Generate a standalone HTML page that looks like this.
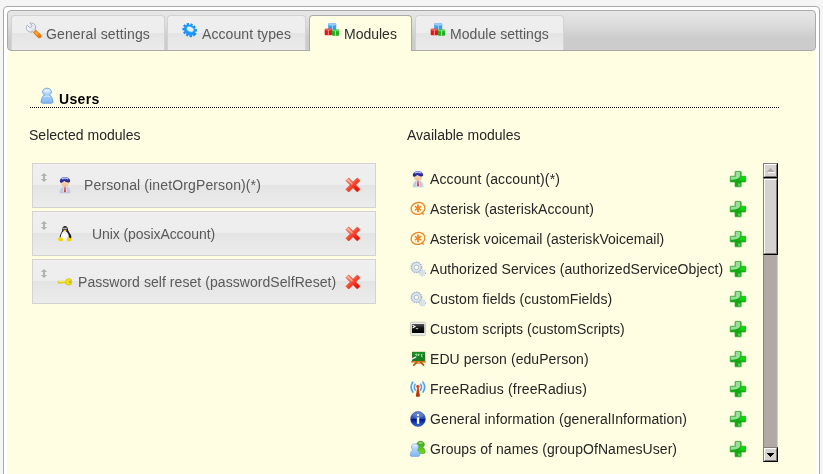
<!DOCTYPE html>
<html>
<head>
<meta charset="utf-8">
<title>LDAP Account Manager - Modules</title>
<style>
html,body{margin:0;padding:0}
body{background:#f5f5f5;font-family:"Liberation Sans",sans-serif;font-size:14px;color:#000;width:823px;height:474px;overflow:hidden;position:relative}
#root{position:absolute;left:0;top:0;width:823px;height:474px;overflow:hidden;will-change:transform}
#widget{position:absolute;left:3px;top:6px;width:815px;height:600px;border:1px solid #aaa;border-radius:4px;background:#fff}
#nav{position:absolute;left:7px;top:10px;width:807px;height:39px;border:1px solid #aaa;border-radius:4px;background:linear-gradient(#e7e7e7 0,#dcdcdc 35%,#cccccc 70%,#cccccc 100%)}
#panel{position:absolute;left:7px;top:51px;width:809px;height:560px;background:#fffde2}
.tab{position:absolute;top:15px;height:34px;border:1px solid #d3d3d3;border-bottom:0;border-radius:4px 4px 0 0;background:linear-gradient(#efefef 0,#ededed 50%,#e4e4e4 50%,#ebebeb 100%)}
.tab.active{border-color:#aaa;background:#fffde2;height:35px}
.tx{position:absolute;line-height:16px;height:16px;font-size:14px;white-space:pre}
.legend{position:absolute;left:59px;top:91px;font-weight:bold;font-size:14px;line-height:16px;letter-spacing:.35px}
.dotted{position:absolute;left:30px;top:107px;width:750px;height:1px;background:repeating-linear-gradient(90deg,#000 0,#000 1px,transparent 1px,transparent 2px)}
.box{position:absolute;left:32px;width:342px;height:43px;border:1px solid #d3d3d3;background:linear-gradient(#efefef 0,#ededed 50%,#e4e4e4 50%,#ececec 100%)}
#sb{position:absolute;left:763px;top:163px;width:15px;height:299px;background:#b1a9a6;box-sizing:border-box;border-left:1px solid #8a8380;border-right:1px solid #d4cfcc}
.sbtn{position:absolute;left:-1px;width:11px;height:11px;background:#d6d2d0;border-style:solid;border-width:2px;border-color:#fff #7b7674 #7b7674 #fff;outline:0}
.sbtn:before{content:"";position:absolute;left:-2px;top:-2px;right:-2px;bottom:-2px;border-style:solid;border-width:1px;border-color:#848080 #000 #000 #848080}
#icons{position:absolute;left:0;top:0}
</style>
</head>
<body>
<div id="root">
<div id="widget"></div>
<div id="nav"></div>
<div id="panel"></div>

<div class="tab" style="left:11px;width:152px"></div>
<div class="tab" style="left:167px;width:137px"></div>
<div class="tab active" style="left:309px;width:101px"></div>
<div class="tab" style="left:415px;width:147px"></div>

<div class="legend">Users</div>
<div class="dotted"></div>

<div class="box" style="top:163px"></div>
<div class="box" style="top:211px"></div>
<div class="box" style="top:259px"></div>

<div id="sb">
 <div class="sbtn" style="top:0"></div>
 <div class="sbtn" style="top:15px;height:73px"></div>
 <div class="sbtn" style="top:284px"></div>
</div>

<div class="tx" style="left:46px;top:26px;color:#5a5a5a;letter-spacing:0.128px">General settings</div>
<div class="tx" style="left:202px;top:26px;color:#5a5a5a;letter-spacing:0.082px">Account types</div>
<div class="tx" style="left:344px;top:26px;color:#2e2e2e;letter-spacing:-0.003px">Modules</div>
<div class="tx" style="left:450px;top:26px;color:#5a5a5a;letter-spacing:0.049px">Module settings</div>
<div class="tx" style="left:29px;top:127px;color:#262626;letter-spacing:0.013px">Selected modules</div>
<div class="tx" style="left:407px;top:127px;color:#262626;letter-spacing:0.007px">Available modules</div>
<div class="tx" style="left:84px;top:177px;color:#5a5a5a;letter-spacing:0.129px">Personal (inetOrgPerson)(*)</div>
<div class="tx" style="left:92px;top:226px;color:#5a5a5a;letter-spacing:-0.074px">Unix (posixAccount)</div>
<div class="tx" style="left:78px;top:274px;color:#5a5a5a;letter-spacing:0.059px">Password self reset (passwordSelfReset)</div>
<div class="tx" style="left:430px;top:171px;color:#262626;letter-spacing:0.120px">Account (account)(*)</div>
<div class="tx" style="left:430px;top:201px;color:#262626;letter-spacing:0.084px">Asterisk (asteriskAccount)</div>
<div class="tx" style="left:430px;top:231px;color:#262626;letter-spacing:0.021px">Asterisk voicemail (asteriskVoicemail)</div>
<div class="tx" style="left:430px;top:261px;color:#262626;letter-spacing:0.066px">Authorized Services (authorizedServiceObject)</div>
<div class="tx" style="left:430px;top:291px;color:#262626;letter-spacing:0.061px">Custom fields (customFields)</div>
<div class="tx" style="left:430px;top:321px;color:#262626;letter-spacing:0.033px">Custom scripts (customScripts)</div>
<div class="tx" style="left:430px;top:351px;color:#262626;letter-spacing:0.069px">EDU person (eduPerson)</div>
<div class="tx" style="left:430px;top:381px;color:#262626;letter-spacing:0.161px">FreeRadius (freeRadius)</div>
<div class="tx" style="left:430px;top:411px;color:#262626;letter-spacing:0.105px">General information (generalInformation)</div>
<div class="tx" style="left:430px;top:441px;color:#262626;letter-spacing:0.059px">Groups of names (groupOfNamesUser)</div>

<svg id="icons" width="823" height="474" viewBox="0 0 823 474">
<defs>
 <linearGradient id="gOr" x1="0" y1="0" x2="1" y2="1"><stop offset="0" stop-color="#fbb03a"/><stop offset="1" stop-color="#f07a00"/></linearGradient>
 <linearGradient id="gSil" x1="0" y1="0" x2="1" y2="1"><stop offset="0" stop-color="#ffffff"/><stop offset=".45" stop-color="#f2f3f8"/><stop offset="1" stop-color="#bcc0d6"/></linearGradient>
 <linearGradient id="gRed" x1="0" y1="0" x2="1" y2="1"><stop offset="0" stop-color="#ffb09a"/><stop offset=".4" stop-color="#fa5a44"/><stop offset=".7" stop-color="#f41c0c"/><stop offset="1" stop-color="#f00000"/></linearGradient>
 <linearGradient id="gUser" x1="0" y1="0" x2="0" y2="1"><stop offset="0" stop-color="#cfe6ff"/><stop offset="1" stop-color="#7fb6f4"/></linearGradient>
 <linearGradient id="gGrn" x1="0" y1="0" x2="0" y2="1"><stop offset="0" stop-color="#3aa51a"/><stop offset="1" stop-color="#6fdc20"/></linearGradient>
 <linearGradient id="gHair" x1="0" y1="0" x2="0" y2="1"><stop offset="0" stop-color="#6f7fd6"/><stop offset=".5" stop-color="#2f2fa0"/><stop offset="1" stop-color="#23238c"/></linearGradient>
 <linearGradient id="gInfo" x1="0" y1="0" x2="0" y2="1"><stop offset="0" stop-color="#5a7fd0"/><stop offset=".5" stop-color="#2446a8"/><stop offset=".52" stop-color="#00148c"/><stop offset="1" stop-color="#2f6fd8"/></linearGradient>
 <linearGradient id="gTow" x1="0" y1="0" x2="0" y2="1"><stop offset="0" stop-color="#ee4a10"/><stop offset="1" stop-color="#a83200"/></linearGradient>
 <linearGradient id="gScr" x1="0" y1="0" x2="0" y2="1"><stop offset="0" stop-color="#555"/><stop offset=".45" stop-color="#111"/><stop offset="1" stop-color="#000"/></linearGradient>

 <!-- wrench -->
  <g id="i-wrench">
  <path d="M1.2 2.2 L3.6 4.6 L5.6 4 L6 2 L3.9 0.2 C6.5 -0.6 9.2 1 9.6 3.6 C9.8 4.8 9.6 5.6 9.2 6.4 L10.4 7.6 L8 10 L6.8 8.8 C4.6 9.8 1.6 8.8 0.6 6.2 C0.1 4.8 0.4 3.2 1.2 2.2 Z" fill="url(#gSil)" stroke="#8f96b8" stroke-width=".7"/>
  <path d="M9.7 9.5 L13.5 13.2" stroke="#e07000" stroke-width="4" stroke-linecap="round"/>
  <path d="M9.7 9.3 L13.5 13" stroke="url(#gOr)" stroke-width="3" stroke-linecap="round"/>
  <path d="M7.9 9.9 L10.3 7.5" stroke="#f08a10" stroke-width="1.4"/>
  <circle cx="13.3" cy="13" r=".8" fill="#ff5a10"/>
 </g>

 <!-- blue gear -->
  <g id="i-gear">
  <g transform="translate(7.7 8.1) rotate(38)">
   <ellipse rx="6.6" ry="5.5" fill="none" stroke="#1c8cf6" stroke-width="2.2" stroke-dasharray="2.2 1.4"/>
   <ellipse rx="6.2" ry="5.1" fill="#1e94fa"/>
  </g>
  <g transform="translate(8.2 7.2) rotate(24)">
   <ellipse rx="4.2" ry="3" fill="#35c0ff"/>
   <ellipse rx="3.4" ry="2.2" fill="#ededed"/>
  </g>
 </g>

 <!-- cubes -->
  <g id="i-cubes">
  <rect x="4.2" y="0.2" width="8" height="6.8" rx="1" fill="#3f9cf2"/>
  <rect x="4.4" y="0.3" width="7.6" height="2.2" rx="1" fill="#9ccdf8"/>
  <rect x="7.9" y="2" width=".8" height="5" fill="#d6ecff" opacity=".8"/>
  <rect x="0.7" y="5.7" width="7.3" height="6.6" rx="1" fill="#e01616"/>
  <rect x="0.9" y="5.8" width="6.9" height="1.6" rx=".8" fill="#f06060"/>
  <rect x="3.9" y="7" width=".8" height="5" fill="#ffd0d0" opacity=".8"/>
  <rect x="7.9" y="6.6" width="7.3" height="6.2" rx="1" fill="#22b022"/>
  <rect x="8.1" y="6.7" width="6.9" height="1.6" rx=".8" fill="#66da66"/>
  <rect x="11.2" y="8" width=".8" height="4.6" fill="#d8ffd8" opacity=".8"/>
 </g>

 <!-- single user (blue) -->
 <g id="i-user">
  <path d="M8 0.2 C10.6 0.2 12.4 1.8 12.4 3.7 C12.4 5.2 11.6 6.3 10.4 6.9 C12.4 7.8 13.4 10.5 14 13.6 C14.1 14.6 13.4 15.2 12.4 15.2 L3.6 15.2 C2.6 15.2 1.9 14.6 2 13.6 C2.6 10.5 3.6 7.8 5.6 6.9 C4.4 6.3 3.6 5.2 3.6 3.7 C3.6 1.8 5.4 0.2 8 0.2 Z" fill="url(#gUser)" stroke="#5b93d8" stroke-width=".8"/>
  <ellipse cx="8" cy="2.6" rx="3.1" ry="1.6" fill="#e6f3ff" opacity=".8"/>
  <path d="M4.4 9.2 C6 7.8 10 7.8 11.6 9.2" stroke="#dbecff" stroke-width="1" fill="none" opacity=".8"/>
 </g>

 <!-- person with blue hair and tie -->
  <g id="i-person">
  <path d="M3.2 15.8 C3.2 12.6 4.6 10.2 6.6 9.6 L9.4 9.6 C11.4 10.2 13 12.6 13 15.8 Z" fill="#d9dfee" stroke="#a4aed0" stroke-width=".6"/>
  <path d="M4.2 15.6 C4.2 13.4 5 11.6 6.2 10.6 L5.4 15.6 Z M11.9 15.6 C11.9 13.4 11.1 11.6 9.9 10.6 L10.7 15.6 Z" fill="#b4bcdc"/>
  <path d="M7.6 9.6 L8.4 9.6 L8.8 14.6 L8 15.6 L7.2 14.6 Z" fill="#e21b1b"/>
  <ellipse cx="8" cy="6.2" rx="3.9" ry="3.6" fill="#f7cfa6"/>
  <path d="M2.9 4.8 C2.5 2.2 4.8 0.1 8 0.1 C11.2 0.1 13.5 2.2 13.1 4.8 C12.4 6 9.8 5.6 7.6 4 C6.6 4.4 5.6 4.8 4.8 5.8 C3.8 5.9 3.1 5.5 2.9 4.8 Z" fill="url(#gHair)"/>
  <path d="M5 2 C6.4 0.9 9.6 0.9 11 2" stroke="#b4c0f0" stroke-width="1.3" fill="none"/>
  <path d="M5.6 7.6 C6.6 8.8 9.4 8.8 10.4 7.6" stroke="#e0a070" stroke-width=".5" fill="none"/>
 </g>

 <!-- tux -->
  <g id="i-tux">
  <path d="M8 0.6 C9.8 0.6 10.8 2 10.9 3.8 C11 5.6 12.9 7.4 13.9 9.6 C14.7 11.4 14.4 13.4 13 14.4 L3.6 14.4 C2.4 13.4 2.4 11.4 3.1 9.8 C3.9 7.6 5.2 6 5.3 4 C5.4 2 6.2 0.6 8 0.6 Z" fill="#1a1a1a"/>
  <path d="M7.7 5.2 C9.6 5.2 10.8 7.6 11.5 9.6 C12.2 11.6 11.6 14.2 9.8 14.8 L5.4 14.8 C3.6 14.2 3.4 11.8 4 9.8 C4.6 7.8 5.8 5.2 7.7 5.2 Z" fill="#f8f8f8"/>
  <path d="M10.4 7.4 C11.2 9.2 11.8 11.4 11 14" stroke="#c8c8c8" stroke-width=".8" fill="none"/>
  <ellipse cx="7" cy="3.1" rx=".8" ry="1" fill="#ddd"/><ellipse cx="9" cy="3.1" rx=".8" ry="1" fill="#ddd"/>
  <path d="M6.1 4.7 C6.9 4 8.9 4 9.8 4.7 C9.1 6 6.9 6.2 6.1 4.7 Z" fill="#f6c010"/>
  <path d="M1.2 13 C1.8 11.4 3.6 11 4.6 12 C5.6 13 6.6 14 6.2 15 C5.6 16.2 2.6 15.8 1.6 15 C0.9 14.4 0.9 13.8 1.2 13 Z" fill="#f4d20c"/>
  <path d="M10 12.4 C10.6 11.4 12.4 11.6 13.2 12.4 C14 13.2 15 13.6 14.8 14.4 C14.4 15.6 11.6 16 10.4 15.4 C9.6 15 9.6 13.4 10 12.4 Z" fill="#f4d20c"/>
 </g>

 <!-- key -->
  <g id="i-key">
  <path d="M0.9 7 L9 7 L9 9 L5 9 L4.6 9.6 L3.8 9.6 L3.3 9 L2.8 9.6 L1.8 9.6 L0.9 8.7 Z" fill="#e6d716" stroke="#c4b518" stroke-width=".3"/>
  <circle cx="11.7" cy="7.9" r="3.3" fill="#efe016" stroke="#c4b518" stroke-width=".5"/>
  <rect x="1.4" y="7.2" width="7" height=".7" fill="#fbf37a"/>
  <ellipse cx="13.1" cy="7.9" rx=".7" ry="1.1" fill="#9a9460"/>
 </g>

 <!-- red X -->
  <g id="i-del">
  <path d="M3.7 1 L8 5.3 L12.3 1 L15 3.7 L10.7 8 L15 12.3 L12.3 15 L8 10.7 L3.7 15 L1 12.3 L5.3 8 L1 3.7 Z" fill="url(#gRed)" stroke="#dc3c20" stroke-width=".7" stroke-linejoin="round"/>
  <path d="M3 2.8 L6.8 6.6" stroke="#ffc4b4" stroke-width="1.6" stroke-linecap="round" opacity=".7"/>
 </g>

 <!-- green plus -->
 <g id="i-add">
  <path d="M5.6 0.4 L10.6 0.4 Q11.2 0.4 11.2 1 L11.2 5.2 L15.2 5.2 Q15.8 5.2 15.8 5.8 L15.8 10.4 Q15.8 11 15.2 11 L11.2 11 L11.2 15.2 Q11.2 15.8 10.6 15.8 L5.6 15.8 Q5 15.8 5 15.2 L5 11 L0.8 11 Q0.2 11 0.2 10.4 L0.2 5.8 Q0.2 5.2 0.8 5.2 L5 5.2 L5 1 Q5 0.4 5.6 0.4 Z" fill="#12a812" stroke="#3aa83a" stroke-width=".7"/>
  <path d="M10.8 5.6 L15.4 5.6 L15.4 9.4 L9 9.4 Z" fill="#10d410"/>
  <path d="M5.6 0.9 L10.2 0.9 L10.2 5 C10 7.4 6 8.6 0.8 8.8 L0.8 5.8 L5.6 5.8 Z" fill="#b4e8b4" opacity=".85"/>
  <path d="M7.6 12.6 L10.4 12.6 L10.4 15.2 L8.6 15.2 Z" fill="#7fdc7f" opacity=".7"/>
 </g>

 <!-- asterisk -->
 <g id="i-ast">
  <g transform="rotate(-18 8 8.2)">
   <ellipse cx="8" cy="8.2" rx="7" ry="5.9" fill="none" stroke="#ef8421" stroke-width="1.3"/>
  </g>
  <path d="M11.6 13.2 L13.8 14.6 L12.8 12.2" fill="#ef8421" stroke="#ef8421" stroke-width=".6"/>
  <g stroke="#ef8421" stroke-linecap="butt">
   <path d="M8 4.3 L8 12" stroke-width="1.8"/>
   <path d="M4.8 6.2 L11.2 10" stroke-width="1.5"/>
   <path d="M4.8 10 L11.2 6.2" stroke-width="1.5"/>
  </g>
 </g>

 <!-- grey gears -->
  <g id="i-cogs">
  <circle cx="6.4" cy="6.4" r="5.2" fill="none" stroke="#a6b9ce" stroke-width="1.5" stroke-dasharray="1.35 1.0"/>
  <circle cx="6.4" cy="6.4" r="3.6" fill="none" stroke="#dfe7f0" stroke-width="2.6"/>
  <circle cx="6.4" cy="6.4" r="4.8" fill="none" stroke="#93a9c2" stroke-width=".6"/>
  <circle cx="6.4" cy="6.4" r="2.3" fill="none" stroke="#8ea5bf" stroke-width=".7"/>
  <circle cx="12.4" cy="12" r="2.8" fill="none" stroke="#a6b9ce" stroke-width="1.2" stroke-dasharray="1.1 .9"/>
  <circle cx="12.4" cy="12" r="1.8" fill="none" stroke="#dbe4ee" stroke-width="1.7"/>
  <circle cx="12.4" cy="12" r=".9" fill="none" stroke="#a9bcd2" stroke-width=".4"/>
 </g>

 <!-- terminal -->
 <g id="i-term">
  <rect x="0.4" y="2" width="15.2" height="13.4" rx="1.4" fill="#ececea" stroke="#c4c4b4" stroke-width=".8"/>
  <rect x="1.9" y="3.8" width="12.3" height="9" rx=".6" fill="url(#gScr)"/>
  <path d="M2.6 5 L5 6.4 L2.6 7.8" stroke="#fff" stroke-width="1.1" fill="none"/>
  <rect x="5.8" y="8" width="2.4" height=".9" fill="#cfd8d8"/>
 </g>

 <!-- blackboard -->
  <g id="i-edu">
  <rect x="2" y="1.6" width="13.2" height="9.6" fill="#8a4a1c"/>
  <rect x="2.3" y="1.8" width="12.4" height="8.9" fill="#11821f"/>
  <rect x="2.3" y="1.8" width="12.4" height="3" fill="#1a9a2a" opacity=".6"/>
  <path d="M5 4.6 L6.4 3.6 L6.4 6 M8 3.8 L9.4 4.6 L8 5.6 Z M11 4.4 L12.4 4.4 M11.6 4.4 L11.6 6.6 L12.6 6.6" stroke="#d6f2d6" stroke-width=".7" fill="none"/>
  <rect x="1.2" y="10.8" width="14.6" height="1.6" fill="#d27a20"/>
  <path d="M6.6 12.2 L3.8 15 M11 12.2 L13.6 15" stroke="#b4560e" stroke-width="1.7" stroke-linecap="round"/>
  <path d="M6 12.9 L11.6 12.9" stroke="#c8701a" stroke-width="1"/>
  <path d="M0.6 9.4 L5.6 7" stroke="#f2f2f8" stroke-width="1.4" stroke-linecap="round"/>
 </g>

 <!-- radius antenna -->
 <g id="i-rad">
  <path d="M7.3 8.4 L8.5 8.4 L10 18.2 Q7.9 19.2 5.8 18.2 Z" fill="url(#gTow)"/>
  <circle cx="7.9" cy="8.4" r="1.7" fill="#ee4812"/>
  <g fill="none" stroke="#4ea2f8" stroke-linecap="round">
   <path d="M2.8 4.2 C0.7 7.2 0.7 11 2.8 14" stroke-width="1.7"/>
   <path d="M5.2 6.2 C4 8 4 10.4 5.2 12.2" stroke-width="1.5"/>
   <path d="M13 4.2 C15.1 7.2 15.1 11 13 14" stroke-width="1.7"/>
   <path d="M10.6 6.2 C11.8 8 11.8 10.4 10.6 12.2" stroke-width="1.5"/>
  </g>
 </g>

 <!-- info -->
 <g id="i-info">
  <circle cx="8" cy="8" r="7.4" fill="url(#gInfo)" stroke="#2a3f9a" stroke-width=".6"/>
  <ellipse cx="8" cy="4.2" rx="5.2" ry="3" fill="#8aa6e6" opacity=".35"/>
  <circle cx="8" cy="4.1" r="1.15" fill="#fff"/>
  <rect x="6.9" y="6.4" width="2.3" height="6.4" fill="#fff"/>
 </g>

 <!-- group -->
 <g id="i-group">
  <path d="M10.6 0.2 C12.8 0.2 14.4 1.6 14.4 3.4 C14.4 4.8 13.6 5.8 12.6 6.3 C14.2 7 15 8.8 15.2 11 C15.2 11.8 14.6 12.4 13.8 12.4 L8 12.4 L8 6.4 C7.2 5.8 6.8 4.6 6.8 3.4 C6.8 1.6 8.4 0.2 10.6 0.2 Z" fill="url(#gGrn)" stroke="#2d8a14" stroke-width=".5"/>
  <ellipse cx="10.6" cy="2" rx="2.4" ry="1.1" fill="#9be27a" opacity=".8"/>
  <path d="M5 2.8 C7.2 2.8 8.6 4.2 8.6 5.9 C8.6 7.2 7.9 8.1 6.9 8.7 C8.6 9.4 9.5 11.4 9.8 13.8 C9.9 14.8 9.2 15.4 8.4 15.4 L1.6 15.4 C0.8 15.4 0.1 14.8 0.2 13.8 C0.5 11.4 1.4 9.4 3.1 8.7 C2.1 8.1 1.4 7.2 1.4 5.9 C1.4 4.2 2.8 2.8 5 2.8 Z" fill="url(#gUser)" stroke="#6a9fe0" stroke-width=".6"/>
  <ellipse cx="5" cy="4.6" rx="2.3" ry="1.1" fill="#e6f3ff" opacity=".8"/>
 </g>

 <!-- up/down arrow -->
 <g id="i-ud">
  <path d="M3.4 0 L6.5 3.1 L4.4 3.1 L4.4 6.1 L6.5 6.1 L3.4 9.2 L0.3 6.1 L2.4 6.1 L2.4 3.1 L0.3 3.1 Z" fill="#b2b2b2"/>
 </g>
</defs>

<use href="#i-wrench" x="26" y="23"/>
<use href="#i-gear" x="182" y="22"/>
<use href="#i-cubes" x="324" y="23"/>
<use href="#i-cubes" x="430" y="23"/>
<use href="#i-user" x="39" y="88"/>

<use href="#i-ud" x="40.6" y="172.9"/>
<use href="#i-ud" x="40.6" y="220.9"/>
<use href="#i-ud" x="40.6" y="268.9"/>
<use href="#i-person" x="57" y="177"/>
<use href="#i-tux" x="57" y="225.5"/>
<use href="#i-key" x="57" y="274"/>
<use href="#i-del" x="345" y="177"/>
<use href="#i-del" x="345" y="226"/>
<use href="#i-del" x="345" y="274"/>

<use href="#i-person" x="410" y="171"/>
<use href="#i-ast" x="410" y="200.2"/>
<use href="#i-ast" x="410" y="230.2"/>
<use href="#i-cogs" x="410" y="261"/>
<use href="#i-cogs" x="410" y="291"/>
<use href="#i-term" x="410" y="320.2"/>
<use href="#i-edu" x="410" y="350.2"/>
<use href="#i-rad" x="410" y="378"/>
<use href="#i-info" x="410" y="411"/>
<use href="#i-group" x="410" y="441"/>

<g id="sbarrows" shape-rendering="crispEdges">
 <path d="M771 169h1v1h1v1h1v1h1v1h-7v-1h1v-1h1v-1h1z" fill="#fff"/>
 <path d="M770 168h1v1h1v1h1v1h1v1h-7v-1h1v-1h1v-1h1z" fill="#b1a9a6"/>
 <path d="M767 453h7v1h-1v1h-1v1h-1v1h-1v-1h-1v-1h-1v-1h-1z" fill="#000"/>
</g>
<g id="adds">
<use href="#i-add" x="730" y="171"/>
<use href="#i-add" x="730" y="201"/>
<use href="#i-add" x="730" y="231"/>
<use href="#i-add" x="730" y="261"/>
<use href="#i-add" x="730" y="291"/>
<use href="#i-add" x="730" y="321"/>
<use href="#i-add" x="730" y="351"/>
<use href="#i-add" x="730" y="381"/>
<use href="#i-add" x="730" y="411"/>
<use href="#i-add" x="730" y="441"/>
</g>
</svg>

</div>
</body>
</html>
